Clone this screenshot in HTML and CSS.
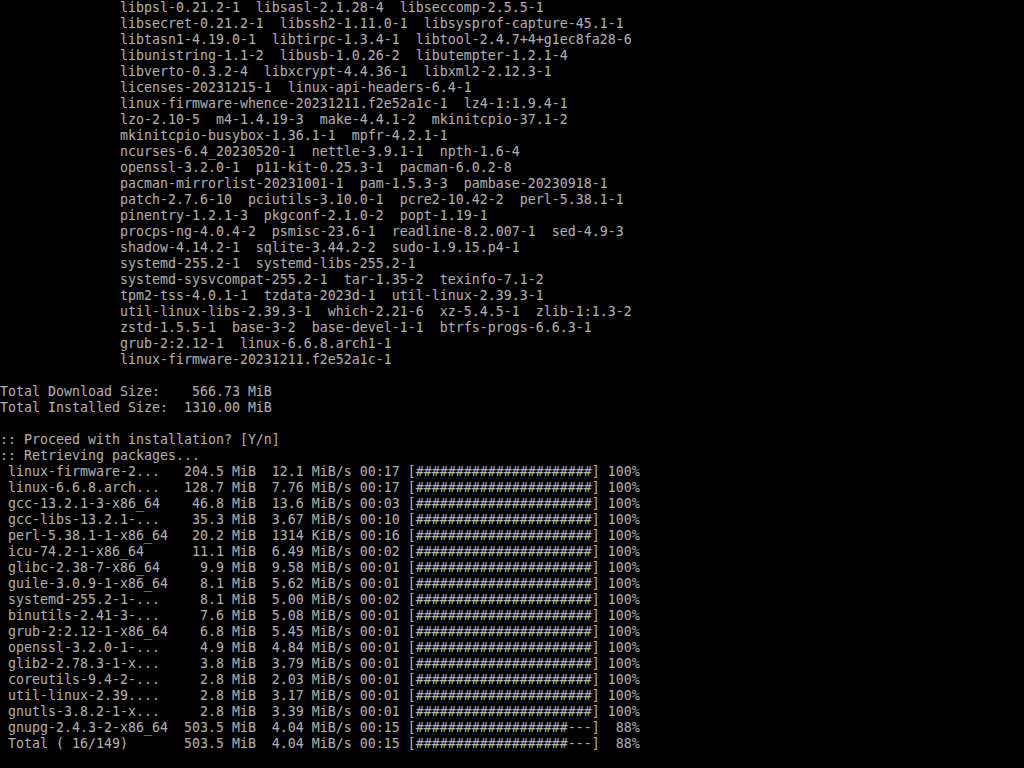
FILE: index.html
```html
<!DOCTYPE html>
<html lang="en">
<head>
  <meta charset="UTF-8" />
  <title>tty1 - pacstrap</title>
  <link rel="stylesheet" href="styles.css">
</head>
<body>
  <div class="screen">
    <!-- package list (wrapped) -->
    <pre class="term">               libpsl-0.21.2-1  libsasl-2.1.28-4  libseccomp-2.5.5-1
               libsecret-0.21.2-1  libssh2-1.11.0-1  libsysprof-capture-45.1-1
               libtasn1-4.19.0-1  libtirpc-1.3.4-1  libtool-2.4.7+4+g1ec8fa28-6
               libunistring-1.1-2  libusb-1.0.26-2  libutempter-1.2.1-4
               libverto-0.3.2-4  libxcrypt-4.4.36-1  libxml2-2.12.3-1
               licenses-20231215-1  linux-api-headers-6.4-1
               linux-firmware-whence-20231211.f2e52a1c-1  lz4-1:1.9.4-1
               lzo-2.10-5  m4-1.4.19-3  make-4.4.1-2  mkinitcpio-37.1-2
               mkinitcpio-busybox-1.36.1-1  mpfr-4.2.1-1
               ncurses-6.4_20230520-1  nettle-3.9.1-1  npth-1.6-4
               openssl-3.2.0-1  p11-kit-0.25.3-1  pacman-6.0.2-8
               pacman-mirrorlist-20231001-1  pam-1.5.3-3  pambase-20230918-1
               patch-2.7.6-10  pciutils-3.10.0-1  pcre2-10.42-2  perl-5.38.1-1
               pinentry-1.2.1-3  pkgconf-2.1.0-2  popt-1.19-1
               procps-ng-4.0.4-2  psmisc-23.6-1  readline-8.2.007-1  sed-4.9-3
               shadow-4.14.2-1  sqlite-3.44.2-2  sudo-1.9.15.p4-1
               systemd-255.2-1  systemd-libs-255.2-1
               systemd-sysvcompat-255.2-1  tar-1.35-2  texinfo-7.1-2
               tpm2-tss-4.0.1-1  tzdata-2023d-1  util-linux-2.39.3-1
               util-linux-libs-2.39.3-1  which-2.21-6  xz-5.4.5-1  zlib-1:1.3-2
               zstd-1.5.5-1  base-3-2  base-devel-1-1  btrfs-progs-6.6.3-1
               grub-2:2.12-1  linux-6.6.8.arch1-1
               linux-firmware-20231211.f2e52a1c-1
</pre>
    <pre class="term blank"> </pre>
    <!-- totals -->
    <pre class="term">Total Download Size:    566.73 MiB
Total Installed Size:  1310.00 MiB
</pre>
    <pre class="term blank"> </pre>
    <!-- download progress -->
    <pre class="term">:: Proceed with installation? [Y/n]
:: Retrieving packages...
 linux-firmware-2...   204.5 MiB  12.1 MiB/s 00:17 [######################] 100%
 linux-6.6.8.arch...   128.7 MiB  7.76 MiB/s 00:17 [######################] 100%
 gcc-13.2.1-3-x86_64    46.8 MiB  13.6 MiB/s 00:03 [######################] 100%
 gcc-libs-13.2.1-...    35.3 MiB  3.67 MiB/s 00:10 [######################] 100%
 perl-5.38.1-1-x86_64   20.2 MiB  1314 KiB/s 00:16 [######################] 100%
 icu-74.2-1-x86_64      11.1 MiB  6.49 MiB/s 00:02 [######################] 100%
 glibc-2.38-7-x86_64     9.9 MiB  9.58 MiB/s 00:01 [######################] 100%
 guile-3.0.9-1-x86_64    8.1 MiB  5.62 MiB/s 00:01 [######################] 100%
 systemd-255.2-1-...     8.1 MiB  5.00 MiB/s 00:02 [######################] 100%
 binutils-2.41-3-...     7.6 MiB  5.08 MiB/s 00:01 [######################] 100%
 grub-2:2.12-1-x86_64    6.8 MiB  5.45 MiB/s 00:01 [######################] 100%
 openssl-3.2.0-1-...     4.9 MiB  4.84 MiB/s 00:01 [######################] 100%
 glib2-2.78.3-1-x...     3.8 MiB  3.79 MiB/s 00:01 [######################] 100%
 coreutils-9.4-2-...     2.8 MiB  2.03 MiB/s 00:01 [######################] 100%
 util-linux-2.39....     2.8 MiB  3.17 MiB/s 00:01 [######################] 100%
 gnutls-3.8.2-1-x...     2.8 MiB  3.39 MiB/s 00:01 [######################] 100%
 gnupg-2.4.3-2-x86_64  503.5 MiB  4.04 MiB/s 00:15 [###################---]  88%
 Total ( 16/149)       503.5 MiB  4.04 MiB/s 00:15 [###################---]  88%</pre>
  </div>
</body>
</html>
```

FILE: styles.css
```css
html, body {
  margin: 0;
  padding: 0;
  background: #000;
}
.screen {
  width: 1024px;
  height: 768px;
  overflow: hidden;
  background: #000;
}
.term {
  margin: 0;
  font-family: "DejaVu Sans Mono", "Liberation Mono", monospace;
  font-size: 13.29px;
  line-height: 16px;
  color: #b4b4b4;
  white-space: pre;
}
.term.blank {
  height: 16px;
}
```
